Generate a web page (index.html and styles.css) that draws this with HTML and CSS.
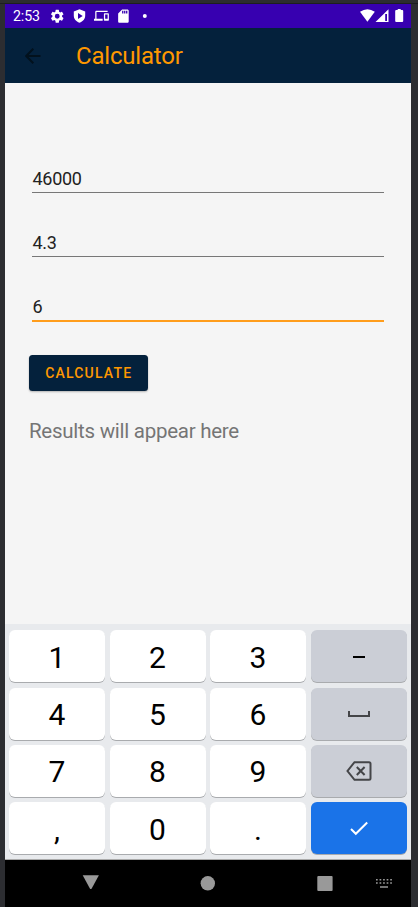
FILE: index.html
```html
<!DOCTYPE html>
<html lang="en">
<head>
<meta charset="utf-8">
<title>Calculator</title>
<link rel="stylesheet" href="styles.css">
</head>
<body>
<main class="phone">
  <div class="status">
    <span class="clock">2:53</span>
    <svg class="status-left" width="100" height="24" viewBox="0 0 100 24" fill="#fff">
      <g transform="translate(4.2 4.2) scale(.67)"><path d="M19.14 12.94c.04-.3.06-.61.06-.94s-.02-.64-.07-.94l2.03-1.58a.49.49 0 0 0 .12-.61l-1.92-3.32a.49.49 0 0 0-.59-.22l-2.39.96a7 7 0 0 0-1.62-.94l-.36-2.54a.48.48 0 0 0-.48-.41h-3.84a.48.48 0 0 0-.47.41l-.36 2.54a7.4 7.4 0 0 0-1.62.94l-2.39-.96a.48.48 0 0 0-.59.22L2.74 8.87a.48.48 0 0 0 .12.61l2.03 1.58a6 6 0 0 0 0 1.88l-2.03 1.58a.49.49 0 0 0-.12.61l1.92 3.32c.12.22.37.29.59.22l2.39-.96c.5.38 1.03.7 1.62.94l.36 2.54c.05.24.24.41.48.41h3.84c.24 0 .44-.17.47-.41l.36-2.54a7.4 7.4 0 0 0 1.62-.94l2.39.96c.22.08.47 0 .59-.22l1.92-3.32a.48.48 0 0 0-.12-.61zM12 15.6a3.6 3.6 0 1 1 0-7.2 3.6 3.6 0 0 1 0 7.2z"/></g>
      <path fill-rule="evenodd" d="M34.500 5.200l5.700 2.200v4.200c0 3.400-2.300 6-5.700 7.200-3.400-1.200-5.700-3.800-5.700-7.200V7.400zM33 9v6l4.700-3z"/>
      <g transform="translate(49 4.300) scale(.62)"><path d="M4 6h18V4H4c-1.100 0-2 .9-2 2v11H0v3h14v-3H4V6zm19 2h-6c-.55 0-1 .45-1 1v10c0 .55.450 1 1 1h6c.55 0 1-.450 1-1V9c0-.550-.450-1-1-1zm-1 9h-4v-7h4v7z"/></g>
      <g transform="translate(70.500 4.200) scale(.66)"><path d="M18 2h-8L4.020 8 4 20c0 1.100.9 2 2 2h12c1.100 0 2-.9 2-2V4c0-1.100-.9-2-2-2zm-6 6h-2V4h2v4zm3 0h-2V4h2v4zm3 0h-2V4h2v4z"/></g>
      <circle cx="99.800" cy="12" r="2"/>
    </svg>
    <svg class="status-right" width="46" height="24" viewBox="0 0 46 24" fill="#fff">
      <path d="M1 7.800Q8.500 2.800 15.800 7.800L8.400 17.700z"/>
      <path fill-rule="evenodd" d="M16.500 18L29.500 5.300V18zM26.200 10v7h1.800v-7z"/>
      <path d="M36.200 7q0-1 1-1h1.500V5h3v1H43.200q1 0 1 1v10q0 1-1 1h-6q-1 0-1-1z"/>
    </svg>
  </div>
  <header class="appbar">
    <svg class="back" width="16" height="16" viewBox="0 0 16 16" fill="none" stroke="#02111d" stroke-width="2"><path d="M15.500 8H1.500M8.300.7L1.200 8l7.100 7.300"/></svg>
    <h1>Calculator</h1>
  </header>
  <section class="content">
    <div class="field">46000</div>
    <div class="field">4.3</div>
    <div class="field active">6</div>
    <button class="calculate">CALCULATE</button>
    <p class="result">Results will appear here</p>
  </section>
  <section class="keyboard">
    <div class="key">1</div><div class="key">2</div><div class="key">3</div>
    <div class="key gray"><svg width="14" height="4"><path d="M1 2h12" stroke="#000" stroke-width="2"/></svg></div>
    <div class="key">4</div><div class="key">5</div><div class="key">6</div>
    <div class="key gray"><svg width="24" height="8" viewBox="0 0 24 8" fill="none" stroke="#444548" stroke-width="2"><path d="M2 1v5h20V1"/></svg></div>
    <div class="key">7</div><div class="key">8</div><div class="key">9</div>
    <div class="key gray"><svg width="26" height="20" viewBox="0 0 26 20" fill="none" stroke="#444548" stroke-width="2"><path d="M8.500 1.200H23q1.500 0 1.500 1.500v14.600q0 1.500-1.500 1.500H8.500L1.500 10zM10.800 6l7.800 8M18.600 6l-7.800 8"/></svg></div>
    <div class="key">,</div><div class="key">0</div><div class="key">.</div>
    <div class="key blue"><svg width="20" height="16" viewBox="0 0 20 16" fill="none" stroke="#fff" stroke-width="2"><path d="M2 8l4.800 4.800L18.200 1.500"/></svg></div>
  </section>
  <nav class="nav">
    <svg width="406" height="47" viewBox="5 860 406 47" fill="#999">
      <path d="M82.700 875.300h16.200L91.700 888.500q-.9 1.200-1.800 0z"/>
      <circle cx="207.800" cy="883.300" r="7.200"/>
      <rect x="317.300" y="876" width="15.300" height="15" rx="1"/>
      <path d="M376 879.800h16M376 883h16" stroke="#999" stroke-width="1.500" stroke-dasharray="1.700 1.850"/>
      <path d="M380 887h8" stroke="#999" stroke-width="1.500"/>
    </svg>
  </nav>
</main>
</body>
</html>
```
FILE: styles.css
```css
* { box-sizing: border-box; }
body {
  margin: 0;
  padding: 4px 7px 0 5px;
  height: 907px;
  overflow: hidden;
  background: linear-gradient(#2c2d30 0 3px, #1d1e21 3px 4px, #2c2d31 4px);
  font-family: Roboto, sans-serif;
}
svg { display: block; }
.phone { height: 903px; display: flex; flex-direction: column; background: #f5f5f5; }
.status { height: 24px; flex: none; display: flex; align-items: center; background: #3700b0; color: #fff; padding-left: 8px; }
.clock { width: 32px; font-size: 14.200px; line-height: 24px; letter-spacing: -.1px; }
.status-left { overflow: visible; }
.status-right { margin: 0 6px 0 auto; }
.appbar { height: 55px; flex: none; display: flex; align-items: center; background: #04213c; padding-left: 20px; }
.appbar h1 { margin: 1px 0 0 35px; font-size: 24px; line-height: 28px; font-weight: 400; letter-spacing: -.2px; color: #ff9800; }
.content { height: 541px; flex: none; padding: 78px 27px 0 24px; }
.field { height: 32px; margin: 0 0 32px 3px; padding: 8px 1px 0 .5px; font-size: 18px; line-height: 20px; letter-spacing: -.3px; color: #222; border-bottom: 1px solid #777; }
.active { height: 33px; border-bottom: 2px solid #ff9d1c; margin-bottom: 33px; }
.calculate { display: block; width: 118.500px; height: 36px; margin: 0; padding: 0 0 0 1px; border: 0; border-radius: 3.500px; background: #04213c; color: #ff9800; font: 500 14px/20px Roboto, sans-serif; letter-spacing: 1.200px; box-shadow: 0 1px 2px #0004; }
.result { margin: 28px 0 0; font-size: 20.500px; line-height: 24px; letter-spacing: -.26px; color: #757575; }
.keyboard { height: 236px; flex: none; display: grid; grid-template-columns: repeat(4, 96px); grid-auto-rows: 52px; column-gap: 4.500px; row-gap: 5.400px; padding: 6.200px 4px 0; background: #e8eaed; border-bottom: 1px solid #aaa; }
.key { display: flex; align-items: center; justify-content: center; padding-top: 3px; border-radius: 6px; background: #fff; color: #000; font-size: 30px; line-height: 36px; box-shadow: 0 1px 0 #a9abae; }
.gray, .blue { padding-top: 1px; }
.gray { background: #cbced6; }
.blue { background: #1a73e8; }
.nav { height: 47px; flex: none; background: #000; }
```
